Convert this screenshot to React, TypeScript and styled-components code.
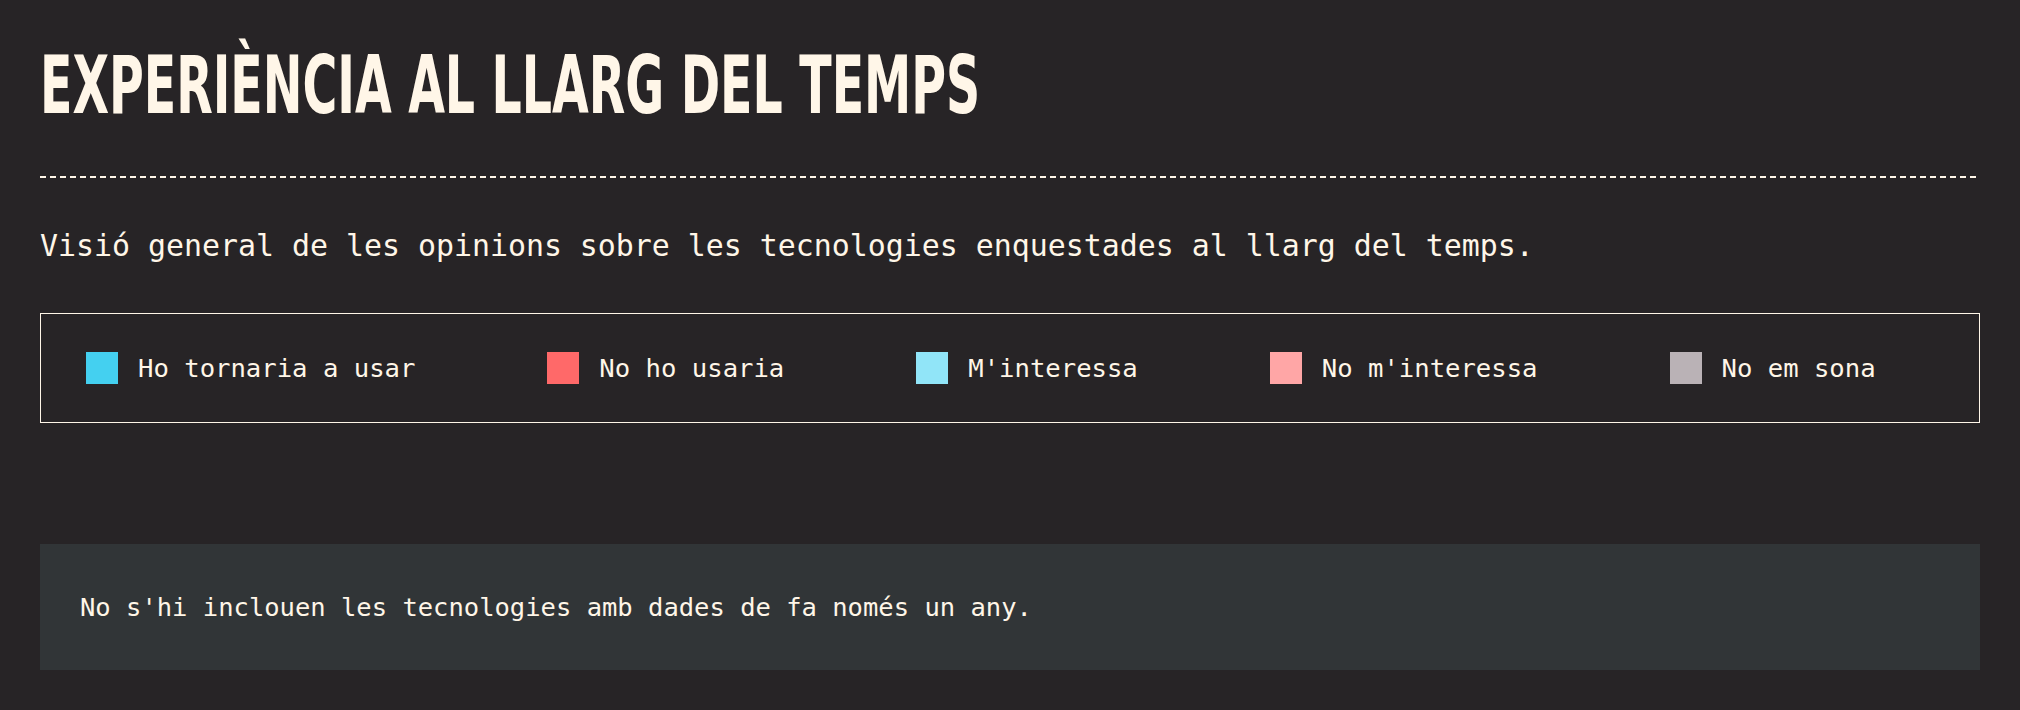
import React from 'react';
import styled, { createGlobalStyle } from 'styled-components';

const cream = '#fff6e8';

const GlobalStyle = createGlobalStyle`
    body {
        margin: 0;
        background: #272426;
        color: ${cream};
    }
`;

const Page = styled.div`
    display: flex;
    flex-direction: column;
    padding: 45px 40px 40px;
    font-family: 'DejaVu Sans Mono', 'Liberation Mono', monospace;
`;

// no condensed display face installed, so squeeze the condensed bold
const Title = styled.h2`
    align-self: flex-start;
    margin: 0;
    font-family: 'DejaVu Sans Condensed', 'Liberation Sans', sans-serif;
    font-size: 81px;
    line-height: 1;
    font-weight: 700;
    text-transform: uppercase;
    white-space: nowrap;
    transform-origin: left center;
    transform: scaleX(0.651);
`;

const Divider = styled.hr`
    margin: 50px 0 0;
    border: none;
    height: 2px;
    background: repeating-linear-gradient(to right, ${cream} 0 6px, transparent 6px 10px);
`;

const Intro = styled.p`
    margin: 45px 0 0;
    font-size: 29.9px;
    line-height: 45px;
`;

const Legend = styled.div`
    display: flex;
    align-items: center;
    gap: 132px;
    height: 110px;
    box-sizing: border-box;
    margin-top: 45px;
    padding-left: 45px;
    border: 1px solid ${cream};
`;

const LegendItem = styled.div`
    display: flex;
    align-items: center;
    gap: 20px;
    font-size: 25.6px;
`;

const Swatch = styled.span<{ $color: string }>`
    width: 32px;
    height: 32px;
    background: ${(p) => p.$color};
`;

const Note = styled.div`
    display: flex;
    align-items: center;
    height: 126px;
    margin-top: 121px;
    padding: 0 40px;
    background: #313537;
    font-size: 25.5px;
`;

const items = [
    { label: 'Ho tornaria a usar', color: '#44d0f0' },
    { label: 'No ho usaria', color: '#ff6969' },
    { label: "M'interessa", color: '#91e5f8' },
    { label: "No m'interessa", color: '#ffa6a6' },
    { label: 'No em sona', color: '#bab2b6' },
];

const App: React.FC = () => (
    <>
        <GlobalStyle />
        <Page>
            <Title>Experiència al llarg del temps</Title>
            <Divider />
            <Intro>Visió general de les opinions sobre les tecnologies enquestades al llarg del temps.</Intro>
            <Legend>
                {items.map((item) => (
                    <LegendItem key={item.label}>
                        <Swatch $color={item.color} />
                        {item.label}
                    </LegendItem>
                ))}
            </Legend>
            <Note>No s'hi inclouen les tecnologies amb dades de fa només un any.</Note>
        </Page>
    </>
);

export default App;
